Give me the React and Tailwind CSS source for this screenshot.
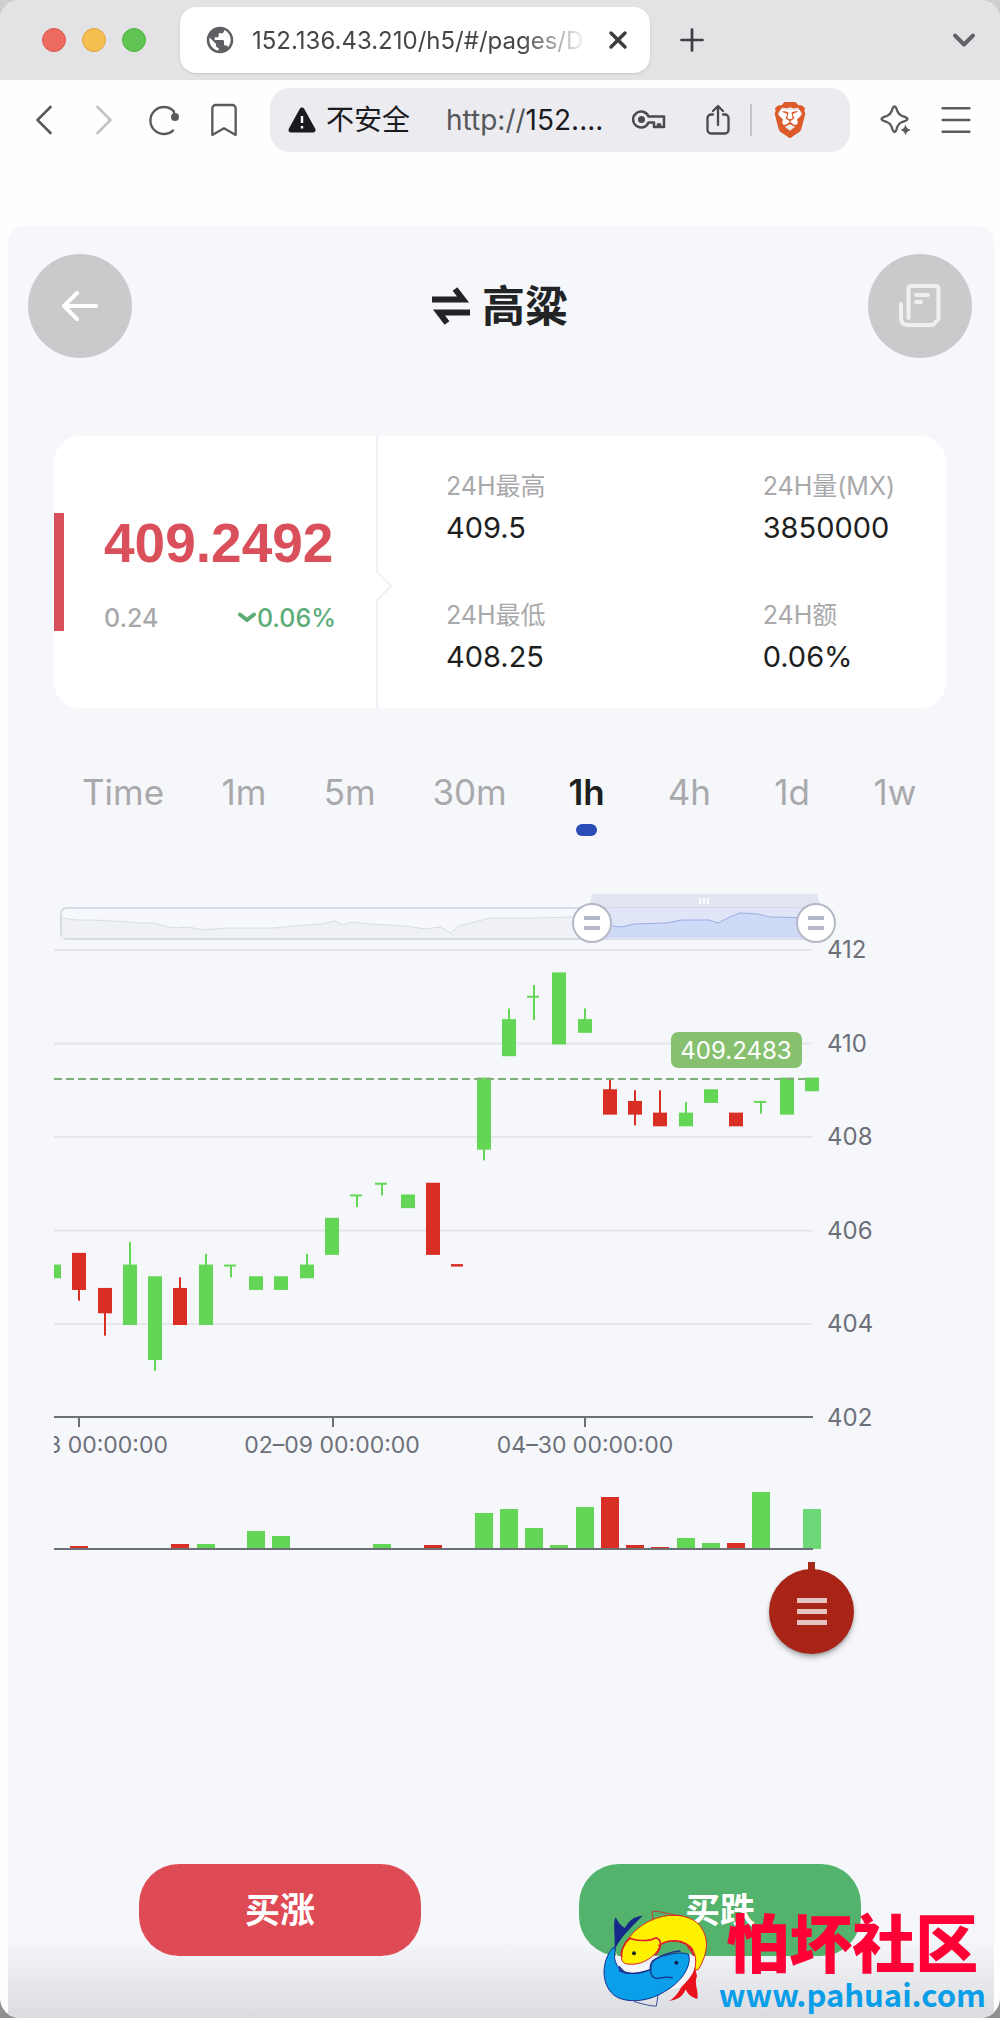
import React from 'react';
import { Bookmark, ChevronDown, ChevronLeft, ChevronRight, Menu, Plus, X } from 'lucide-react';
import { MdPublic } from 'react-icons/md';
import { SiBrave } from 'react-icons/si';

const GREEN = '#64d655';
const RED = '#d82e24';

// open, close, low, high, volume (in px of the volume pane)
const candles = [
  [405, 405.25, 405, 405.25, 0],
  [405.5, 404.75, 404.5, 405.5, 3],
  [404.75, 404.25, 403.75, 404.75, 1],
  [404, 405.25, 404, 405.75, 1],
  [403.25, 405, 403, 405, 0],
  [404.75, 404, 404, 405, 5],
  [404, 405.25, 404, 405.5, 5],
  [405.25, 405.25, 405, 405.25, 1],
  [404.75, 405, 404.75, 405, 18],
  [404.75, 405, 404.75, 405, 13],
  [405, 405.25, 405, 405.5, 0],
  [405.5, 406.25, 405.5, 406.25, 0],
  [406.75, 406.75, 406.5, 406.75, 1],
  [407, 407, 406.75, 407, 5],
  [406.5, 406.75, 406.5, 406.75, 1],
  [407, 405.5, 405.5, 407, 4],
  [405.26, 405.25, 405.25, 405.25, 1],
  [407.75, 409.25, 407.5, 409.25, 36],
  [409.75, 410.5, 409.75, 410.75, 40],
  [411, 411, 410.5, 411.25, 21],
  [410, 411.5, 410, 411.5, 4],
  [410.25, 410.5, 410.25, 410.75, 42],
  [409, 408.5, 408.5, 409.25, 52],
  [408.75, 408.5, 408.25, 409, 4],
  [408.5, 408.25, 408.25, 409, 2],
  [408.25, 408.5, 408.25, 408.75, 11],
  [408.75, 409, 408.75, 409, 6],
  [408.5, 408.25, 408.25, 408.5, 6],
  [408.75, 408.75, 408.5, 408.75, 57],
  [408.5, 409.25, 408.5, 409.25, 1],
  [409, 409.25, 409, 409.25, 40],
];

const STEP = 758 / 30;
const yOf = (price) => 60 + (412 - price) * 46.75;

const periods = ['Time', '1m', '5m', '30m', '1h', '4h', '1d', '1w'];

const stats = [
  { label: '24H最高', value: '409.5' },
  { label: '24H量(MX)', value: '3850000' },
  { label: '24H最低', value: '408.25' },
  { label: '24H额', value: '0.06%' },
];

const TabStrip = () => (
  <div className="flex h-20 items-center bg-[#e3e2e5]">
    <div className="flex w-[180px] shrink-0 gap-4 pl-[42px]">
      <span className="size-6 rounded-full border border-[#d95a50] bg-[#ec6a5e]" />
      <span className="size-6 rounded-full border border-[#dba73c] bg-[#f4bf4f]" />
      <span className="size-6 rounded-full border border-[#52b043] bg-[#61c554]" />
    </div>
    <div className="flex h-[66px] w-[470px] items-center rounded-2xl bg-white pr-[18px] pl-6 shadow-sm">
      <MdPublic size={32} className="shrink-0 text-[#5f6063]" />
      <span className="mt-0.5 ml-4 flex-1 overflow-hidden mask-r-from-80% mask-r-to-100% text-2xl whitespace-nowrap text-[#454648]">
        152.136.43.210/h5/#/pages/D
      </span>
      <button aria-label="Close tab" className="ml-4 text-[#3c3d40]">
        <X size={28} strokeWidth={3} />
      </button>
    </div>
    <button aria-label="New tab" className="ml-6 text-[#3c3d40]">
      <Plus size={36} strokeWidth={1.8} />
    </button>
    <button aria-label="Search tabs" className="mr-[18px] ml-auto text-[#606164]">
      <ChevronDown size={36} strokeWidth={2.6} />
    </button>
  </div>
);

const Toolbar = () => (
  <div className="flex h-20 items-center text-[#5a5b5f]">
    <div className="flex w-[270px] shrink-0 items-center pl-[18px]">
      <button aria-label="Back"><ChevronLeft size={52} strokeWidth={1.2} /></button>
      <button aria-label="Forward" className="ml-2 text-[#c3c3c7]"><ChevronRight size={52} strokeWidth={1.2} /></button>
      <button aria-label="Reload" className="ml-4">
        <svg width="34" height="34" viewBox="0 0 34 34" fill="none" stroke="currentColor" strokeWidth="2.4" strokeLinecap="round">
          <path d="M27 27.5A13.5 13.5 0 1 1 27.5 8" />
          <circle cx="29" cy="14" r="4" fill="currentColor" stroke="none" />
          <path d="M27.5 8 29 13" />
        </svg>
      </button>
      <button aria-label="Bookmark" className="ml-6"><Bookmark size={40} strokeWidth={1.4} /></button>
    </div>
    <div className="flex h-16 min-w-0 flex-1 items-center rounded-[20px] bg-[#ecebef] pr-[42px] pl-[18px] text-[28px]">
      <svg width="28" height="26" viewBox="0 0 28 26" className="shrink-0">
        <path d="M14 3 25 23H3Z" fill="#1b1b1f" stroke="#1b1b1f" strokeWidth="5" strokeLinejoin="round" />
        <path d="M14 9v7M14 19v2.5" stroke="#fff" strokeWidth="2.4" />
      </svg>
      <span className="ml-2.5 shrink-0 text-[#1b1b1f]">不安全</span>
      <span className="ml-9 shrink-0 text-[#1b1b1f]"><span className="text-[#55565a]">http://</span>152....</span>
      <svg width="34" height="22" viewBox="0 0 34 22" className="ml-auto shrink-0" fill="none" stroke="#4a4b4f" strokeWidth="2.5" strokeLinejoin="round">
        <path d="M16.5 7.5A8 8 0 1 0 16.5 13.5H22V18H26V15.5H28V18H32V7.5Z" />
        <circle cx="9.5" cy="10.5" r="3.5" fill="#4a4b4f" stroke="none" />
      </svg>
      <svg width="24" height="32" viewBox="0 0 24 32" className="ml-10 shrink-0" fill="none" stroke="#4a4b4f" strokeWidth="2.3" strokeLinecap="round" strokeLinejoin="round">
        <path d="M7 10.5H5a3.5 3.5 0 0 0-3.5 3.5v12A3.5 3.5 0 0 0 5 29.5h14a3.5 3.5 0 0 0 3.5-3.5V14a3.5 3.5 0 0 0-3.5-3.5h-2M12 21V2.5M7 7l5-5 5 5" />
      </svg>
      <span className="ml-5 h-8 w-0.5 shrink-0 bg-[#c5c5c9]" />
      <span className="relative ml-5 flex size-9 shrink-0 items-center justify-center">
        <span className="absolute inset-x-2 top-2 bottom-3 rounded-b-xl bg-white" />
        <SiBrave size={36} className="relative text-[#dd5a2b]" />
      </span>
    </div>
    <button aria-label="Leo AI" className="ml-[30px]">
      <svg width="32" height="32" viewBox="0 0 32 32" fill="none" stroke="currentColor" strokeWidth="2.3" strokeLinejoin="round">
        <path d="M14.5 2.5C16 2.5 16.5 4.5 17.5 7.5C18.5 10 19.5 11 22 12C25 13 27.5 13.5 27.5 15C27.5 16.5 25 17 22 18C19.5 19 18.5 20 17.5 22.5C16.5 25.5 16 28 14.5 28C13 28 12.5 25.5 11.5 22.5C10.5 20 9.5 19 7 18C4 17 1.5 16.5 1.5 15C1.5 13.5 4 13 7 12C9.5 11 10.5 10 11.5 7.5C12.5 4.5 13 2.5 14.5 2.5Z" />
        <path d="M25.5 19.5 27.5 24 32 26 27.5 28 25.5 32 23.5 28 19.5 26 23.5 24Z" fill="currentColor" stroke="#fff" strokeWidth="1" />
      </svg>
    </button>
    <button aria-label="Menu" className="mr-6 ml-6"><Menu size={40} strokeWidth={1.5} /></button>
  </div>
);

const QuoteCard = () => (
  <section className="flex h-[272px] rounded-[26px] bg-white">
    <div className="relative flex w-[324px] shrink-0 items-center border-r-2 border-[#f1f1f4]">
      <span className="h-[118px] w-2.5 bg-[#d94f5a]" />
      <div className="ml-10 flex w-[232px] flex-col gap-9 pt-1">
        <p className="font-['Liberation_Sans'] text-[55px] leading-[52px] font-bold text-[#d94f5a]">409.2492</p>
        <div className="flex items-center justify-between text-[25px] leading-[26px] font-medium">
          <span className="text-[#a9a9ab]">0.24</span>
          <span className="flex items-center text-[#5cad78]">
            <svg width="20" height="14" viewBox="0 0 20 14" fill="none" stroke="currentColor" strokeWidth="4" strokeLinecap="round">
              <path d="M3 3.5 10 9 17 3.5" />
            </svg>
            0.06%
          </span>
        </div>
      </div>
      <span className="absolute top-[139px] -right-3 size-[22px] rotate-45 border-t-2 border-r-2 border-[#f1f1f4] bg-white" />
    </div>
    <dl className="grid flex-1 grid-cols-[19fr_11fr] content-center gap-y-[53px] pl-[68px]">
      {stats.map((s) => (
        <div key={s.label} className="flex flex-col gap-2">
          <dt className="text-[25px] leading-8 text-[#a9a9ab]">{s.label}</dt>
          <dd className="text-[29px] leading-9 text-[#1d1e20]">{s.value}</dd>
        </div>
      ))}
    </dl>
  </section>
);

const PeriodTabs = () => (
  <nav className="flex items-start justify-between px-7">
    {periods.map((p) => {
      const active = p === '1h';
      return (
        <button
          key={p}
          className={`flex min-w-[46px] flex-col items-center text-[35px] leading-10 ${active ? 'font-semibold text-[#1d1e20]' : 'text-[#a9a9ab]'}`}
        >
          {p}
          {active && <span className="mt-3 h-3 w-[21px] rounded-full bg-[#2c4cb8]" />}
        </button>
      );
    })}
  </nav>
);

const KLineChart = () => (
  <svg viewBox="0 0 892 670" className="block w-full" fontSize="24">
    {/* data zoom slider */}
    <rect x="7" y="18" width="755" height="31" rx="6" fill="#f7f8fd" stroke="#d8dbe6" strokeWidth="2" />
    <path
      d="M8 28 22 30 40 30 75 32 86 33 100 33 114 37 122 38 134 37 150 40 170 38 220 38 250 35 268 34 281 31 289 35 297 32 315 34 350 36 372 39 386 37 397 43 405 36 420 32 436 28 480 28 520 27 538 28V48H8Z"
      fill="#eff1f7"
    />
    <path
      d="M8 28 22 30 40 30 75 32 86 33 100 33 114 37 122 38 134 37 150 40 170 38 220 38 250 35 268 34 281 31 289 35 297 32 315 34 350 36 372 39 386 37 397 43 405 36 420 32 436 28 480 28 520 27 538 28"
      fill="none"
      stroke="#d9dce5"
    />
    <rect x="538" y="18" width="224" height="31" fill="#e0e5f8" />
    <path d="M538 48V36L558 36 568 37 580 34 612 33 628 30 655 30 664 33 676 27 686 23 704 24 716 27 762 28V48Z" fill="#cfdaf6" />
    <path d="M558 36 568 37 580 34 612 33 628 30 655 30 664 33 676 27 686 23 704 24 716 27 762 28" fill="none" stroke="#9aaee2" />
    <path d="M535 17 538 4H763L766 17Z" fill="#e2e5f0" />
    <path d="M646 8v6M650 8v6M654 8v6" stroke="#fff" strokeWidth="2" />
    {[538, 762].map((cx) => (
      <g key={cx}>
        <circle cx={cx} cy="33" r="19" fill="#fff" stroke="#b5b9c7" strokeWidth="2" />
        <path d={`M${cx - 8} 28h16M${cx - 8} 38h16`} stroke="#b5b9c7" strokeWidth="4" />
      </g>
    ))}

    {/* price grid */}
    {[412, 410, 408, 406, 404, 402].map((v) => (
      <g key={v}>
        {v !== 402 && <path d={`M0 ${yOf(v)}H758`} stroke="#e4e6eb" strokeWidth="2" />}
        <text x="773" y={yOf(v) + 8} fill="#6e7079">{v}</text>
      </g>
    ))}

    {candles.map(([open, close, low, high], i) => {
      const x = Math.round(i * STEP);
      const color = close >= open ? GREEN : RED;
      const top = yOf(Math.max(open, close));
      const bottom = yOf(Math.min(open, close));
      return (
        <g key={i} fill={color}>
          <rect x={x - 1} y={yOf(high)} width="2" height={yOf(low) - yOf(high)} />
          <rect x={x - 7} y={top - 1} width={bottom - top > 2 ? 14 : 12} height={bottom - top + 2} />
        </g>
      );
    })}

    {/* last price */}
    <path d="M0 189H758" stroke="#7fb077" strokeWidth="2" strokeDasharray="8 4" />
    <rect x="617" y="142" width="131" height="36" rx="7" fill="#87c170" />
    <text x="682" y="169" textAnchor="middle" fill="#fff">409.2483</text>

    {/* time axis */}
    <path d="M0 527H759M25 527v10M279 527v10M531 527v10" fill="none" stroke="#6e7079" strokeWidth="2" />
    <g fill="#6e7079" fontSize="23">
      <text x="114" y="563" textAnchor="end">3 00:00:00</text>
      <text x="278" y="563" textAnchor="middle">02–09 00:00:00</text>
      <text x="531" y="563" textAnchor="middle">04–30 00:00:00</text>
    </g>

    {/* volume */}
    {candles.map(([open, close, , , volume], i) => (
      <rect
        key={i}
        x={Math.round(i * STEP) - 9}
        y={659 - volume}
        width="18"
        height={volume}
        fill={i === candles.length - 1 ? '#6cd878' : close >= open ? GREEN : RED}
      />
    ))}
    <path d="M0 659H759" stroke="#6e7079" strokeWidth="2" />
  </svg>
);

const FishLogo = () => (
  <svg viewBox="0 0 420 384" className="-mr-1.5 h-32 w-[140px] shrink-0" strokeLinecap="round" strokeLinejoin="round">
    <path d="M92 185C95 215 105 238 150 248L200 238 206 214C180 228 150 228 125 226C110 222 100 205 92 185Z" fill="#f6f7fa" />
    <path d="M312 190C318 230 285 275 250 300L286 292C315 272 331 240 330 200Z" fill="#f6f7fa" />
    <path d="M110 200C105 165 150 110 205 88C260 66 322 75 347 110C372 145 370 190 340 238L329 242C338 200 328 174 300 162C275 148 245 152 224 166C218 196 172 228 128 222C112 220 108 210 110 200Z" fill="#fff200" stroke="#e01f26" strokeWidth="3" />
    <path d="M110 200C106 185 116 160 135 144C150 152 190 156 213 143C234 150 228 178 212 194M222 166C250 146 300 146 323 180L308 168C314 178 322 182 326 196" fill="none" stroke="#e01f26" strokeWidth="5" />
    <path d="M204 90 201 66C215 58 245 74 288 77" fill="none" stroke="#e01f26" strokeWidth="2.5" />
    <circle cx="147" cy="190" r="6" fill="#102a20" />
    <path d="M329 232C325 258 300 278 286 296C276 314 264 328 249 334C274 329 292 324 302 298C308 312 318 322 337 327C342 300 326 282 336 258Z" fill="#e8131d" />
    <path d="M311 194C322 230 285 280 238 305C190 336 120 342 85 314C48 280 48 215 84 172L91 178C84 205 92 228 110 240C135 258 170 250 198 238C196 215 215 202 240 197C270 188 300 186 311 194Z" fill="#0a9fe8" stroke="#1b2f8c" strokeWidth="3" />
    <path d="M285 183C262 184 222 196 202 214C190 228 196 262 212 265C228 266 236 258 262 263M104 243 103 230 114 242M104 241C130 258 165 250 198 238" fill="none" stroke="#1b2f8c" strokeWidth="4" />
    <circle cx="274" cy="218" r="6" fill="#0c2158" />
    <path d="M90 180C98 152 132 118 173 77C142 80 132 94 119 114C106 106 98 95 92 82C82 100 92 132 88 178Z" fill="#15298a" />
    <path d="M148 335C172 342 200 349 214 348L219 315" fill="none" stroke="#1b2f8c" strokeWidth="2.5" />
  </svg>
);

export default function App() {
  return (
    <div className="min-h-screen bg-linear-to-b from-[#cfcfd1] to-[#8f8f92] font-['Inter','Noto_Sans_CJK_SC',sans-serif]">
      <div className="relative flex min-h-screen flex-col overflow-hidden rounded-[20px] bg-[#fefefe]">
        <TabStrip />
        <Toolbar />

        <main className="mt-[66px] mr-1.5 ml-2 flex flex-1 flex-col rounded-t-2xl bg-[linear-gradient(to_top,#dbdcdf,#f5f7fa_80px)]">
          <header className="flex items-center justify-between pt-7 pr-[22px] pl-5">
            <button aria-label="返回" className="flex size-[104px] items-center justify-center rounded-full bg-[#c9cacc]">
              <svg width="38" height="30" viewBox="0 0 38 30" fill="none" stroke="#fff" strokeWidth="4" strokeLinecap="round" strokeLinejoin="round">
                <path d="M16 2 3 15l13 13M4 15h31" />
              </svg>
            </button>
            <h1 className="flex items-center gap-3 text-[43px] leading-[52px] font-bold text-[#222325]">
              <svg width="38" height="40" viewBox="0 0 38 40" fill="none" stroke="currentColor" strokeWidth="6">
                <path d="M0 13.5H31L23 3M38 26.5H7L15 37" />
              </svg>
              高粱
            </h1>
            <button aria-label="订单" className="flex size-[104px] items-center justify-center rounded-full bg-[#c9cacc]">
              <svg width="42" height="44" viewBox="0 0 42 44" fill="none" stroke="#efeff1" strokeWidth="4" strokeLinecap="round" strokeLinejoin="round">
                <path d="M9.5 34V5Q9.5 2 12.5 2H36.5Q39.5 2 39.5 5V35L34 41H9Q2 41 2 34V20" />
                <path d="M17 11H29M17 18H22" />
              </svg>
            </button>
          </header>

          <div className="mt-[78px] flex flex-1 flex-col pr-12 pl-[46px]">
            <QuoteCard />
            <div className="mt-16 h-16">
              <PeriodTabs />
            </div>
            <div className="mt-[54px]">
              <KLineChart />
            </div>
            <div className="mt-0.5 flex justify-end pr-[92px]">
              <div className="flex flex-col items-center">
                <span className="h-2 w-[7px] bg-[#a62a1c]" />
                <button aria-label="菜单" className="-mt-px flex size-[85px] flex-col items-center justify-center gap-1.5 rounded-full bg-[#a82416] shadow-md shadow-black/30">
                  <span className="h-[5px] w-[30px] bg-[#e5c3c0]" />
                  <span className="h-[5px] w-[30px] bg-[#e5c3c0]" />
                  <span className="h-[5px] w-[30px] bg-[#e5c3c0]" />
                </button>
              </div>
            </div>
            <div className="mt-auto flex justify-between px-[85px] pt-16 pb-[62px] text-[35px] font-bold text-white">
              <button className="h-[92px] w-[282px] rounded-[40px] bg-[#df4b55]">买涨</button>
              <button className="h-[92px] w-[282px] rounded-[40px] bg-[#53b26b]">买跌</button>
            </div>
          </div>
        </main>

        {/* site watermark */}
        <a href="#" className="absolute right-3.5 bottom-0 flex items-end">
          <FishLogo />
          <span className="flex flex-col items-center pb-1.5">
            <span className="text-[63px] leading-[64px] font-black text-[#ff0036]">怕坏社区</span>
            <span className="font-['Noto_Sans_CJK_SC'] text-[31px] leading-9 font-bold text-[#0a9de8]">www.pahuai.com</span>
          </span>
        </a>
      </div>
    </div>
  );
}
